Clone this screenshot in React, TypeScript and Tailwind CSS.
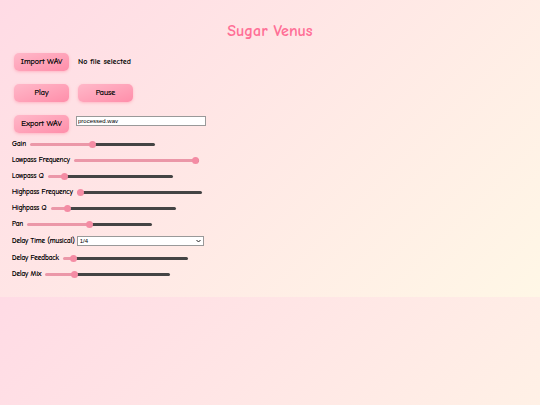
import React, { useState } from "react";

const font = { fontFamily: '"Comic Sans MS", "Comic Neue", cursive' };

type SliderProps = {
    label: string;
    value: number;
    onChange: (v: number) => void;
};

// thumb is 7px, so the fill stops under the thumb centre
const Slider = ({ label, value, onChange }: SliderProps) => {
    const stop = `calc(3.5px + (100% - 7px) * ${value / 100})`;
    return (
        <div className="flex items-center gap-[4px] h-[16px]">
            <label className="text-[7px] text-black [text-shadow:0_0_0.4px_#000]">{label}</label>
            <input
                type="range"
                min={0}
                max={100}
                value={value}
                onChange={(e) => onChange(Number(e.target.value))}
                className="w-[125px] h-[3px] appearance-none rounded-full cursor-pointer [&::-webkit-slider-thumb]:appearance-none [&::-webkit-slider-thumb]:w-[7px] [&::-webkit-slider-thumb]:h-[7px] [&::-webkit-slider-thumb]:rounded-full [&::-webkit-slider-thumb]:bg-[#f48ca4]"
                style={{
                    background: `linear-gradient(to right, #eb97a8 0%, #eb97a8 ${stop}, #444 ${stop}, #444 100%)`,
                }}
            />
        </div>
    );
};

const PinkButton = ({ children }: { children: React.ReactNode }) => (
    <button className="w-[55px] h-[18px] rounded-[5px] bg-gradient-to-br from-[#ffb8c9] to-[#ff8eaa] text-[8px] text-[#111] [text-shadow:0_0_0.4px_#000] shadow-[0_1px_3px_rgba(255,105,135,0.35)]">
        {children}
    </button>
);

export default function App() {
    const [gain, setGain] = useState(50);
    const [lpf, setLpf] = useState(100);
    const [lpq, setLpq] = useState(11);
    const [hpf, setHpf] = useState(0);
    const [hpq, setHpq] = useState(11);
    const [pan, setPan] = useState(50);
    const [feedback, setFeedback] = useState(6);
    const [mix, setMix] = useState(22);
    const [fileName, setFileName] = useState("processed.wav");

    return (
        <div
            className="w-full h-[405px] bg-[linear-gradient(135deg,#ffdbe5_0%,#fff7e6_100%)] bg-[length:100%_297px] bg-repeat"
            style={font}
        >
            <div className="h-[297px] px-[12px] pt-[20px]">
                <h1 className="text-center text-[16px] font-bold text-[#ff6f96] leading-[22px]">Sugar Venus</h1>

                <div className="mt-[11px] flex items-center gap-[9px] pl-[2px]">
                    <PinkButton>Import WAV</PinkButton>
                    <span className="text-[8px] font-bold text-black">No file selected</span>
                </div>

                <div className="mt-[13px] flex items-center gap-[9px] pl-[2px]">
                    <PinkButton>Play</PinkButton>
                    <PinkButton>Pause</PinkButton>
                </div>

                <div className="mt-[13px] flex items-start gap-[7px] pl-[2px]">
                    <PinkButton>Export WAV</PinkButton>
                    <input
                        type="text"
                        value={fileName}
                        onChange={(e) => setFileName(e.target.value)}
                        className="mt-[1px] w-[130px] h-[10px] bg-white border border-[#999] text-[6px] px-[1px] outline-none"
                        style={{ fontFamily: '"Liberation Sans", sans-serif' }}
                    />
                </div>

                <div className="mt-[3px] flex flex-col">
                    <Slider label="Gain" value={gain} onChange={setGain} />
                    <Slider label="Lowpass Frequency" value={lpf} onChange={setLpf} />
                    <Slider label="Lowpass Q" value={lpq} onChange={setLpq} />
                    <Slider label="Highpass Frequency" value={hpf} onChange={setHpf} />
                    <Slider label="Highpass Q" value={hpq} onChange={setHpq} />
                    <Slider label="Pan" value={pan} onChange={setPan} />
                    <div className="flex items-center gap-[2px] h-[18px]">
                        <label className="text-[7px] text-black [text-shadow:0_0_0.4px_#000]">Delay Time (musical)</label>
                        <div className="relative w-[127px] h-[10px]">
                            <select
                                className="block w-full h-full appearance-none bg-white border border-[#999] text-[6px] leading-none pl-[2px] py-0"
                                style={{ fontFamily: '"Liberation Sans", sans-serif' }}
                                defaultValue="1/4"
                            >
                                <option>1/4</option>
                                <option>1/8</option>
                                <option>1/16</option>
                                <option>1/2</option>
                            </select>
                            <svg
                                className="absolute right-[3px] top-[3px] pointer-events-none"
                                width="5"
                                height="4"
                                viewBox="0 0 10 6"
                            >
                                <path d="M1 1 L5 5 L9 1" fill="none" stroke="#222" strokeWidth="2" />
                            </svg>
                        </div>
                    </div>
                    <Slider label="Delay Feedback" value={feedback} onChange={setFeedback} />
                    <Slider label="Delay Mix" value={mix} onChange={setMix} />
                </div>
            </div>
        </div>
    );
}
